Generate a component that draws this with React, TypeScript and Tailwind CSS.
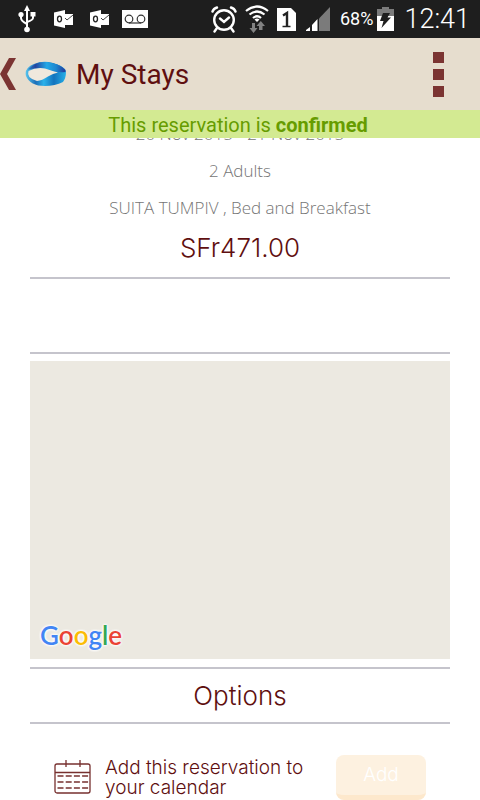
import React from "react";

function UsbIcon() {
  return (
    <svg width="18" height="28" viewBox="0 0 18 28" fill="none" stroke="#fff" strokeWidth="2" aria-hidden="true">
      <path d="M9 4v20M3 10v3q0 3 6 6M15 9v4q0 2-6 4" />
      <path d="M9 0l3 6H6z" fill="#fff" stroke="none" />
      <circle cx="9" cy="24.500" r="2.800" fill="#fff" stroke="none" />
      <circle cx="3" cy="9.500" r="2.600" fill="#fff" stroke="none" />
      <path d="M12.500 7h5v4.500h-5z" fill="#fff" stroke="none" />
    </svg>
  );
}

function OutlookIcon() {
  return (
    <svg width="20" height="18" viewBox="0 0 20 18" aria-hidden="true">
      <path d="M10 4h9v11h-9z" fill="#fff" />
      <path d="M11 8l2 2 6-5" fill="none" stroke="#444" strokeWidth="1" />
      <path d="M0 2.500L11 0v18L0 15.500z" fill="#fff" />
      <ellipse cx="5.500" cy="9" rx="2" ry="2.800" fill="none" stroke="#222" strokeWidth="1.300" />
    </svg>
  );
}

function VoicemailIcon() {
  return (
    <svg width="26" height="18" viewBox="0 0 26 18" aria-hidden="true">
      <path d="M0 0h26v18H0z" fill="#fff" />
      <g fill="none" stroke="#333" strokeWidth="1.200">
        <circle cx="7" cy="9" r="3.800" />
        <circle cx="19" cy="9" r="3.800" />
        <path d="M7 13h12" />
      </g>
    </svg>
  );
}

function AlarmIcon() {
  return (
    <svg width="26" height="27" viewBox="0 0 26 27" fill="none" stroke="#fff" strokeWidth="2.400" strokeLinecap="round" aria-hidden="true">
      <circle cx="13" cy="14" r="9.800" />
      <path d="M9 12.500l4 3.500 5-4.500M1.500 5.500q1-3 4.500-4M24.500 5.500q-1-3-4.500-4M6 22l-2.500 3.500M20 22l2.500 3.500" />
    </svg>
  );
}

function WifiIcon() {
  return (
    <svg width="24" height="28" viewBox="0 0 24 28" fill="none" stroke="#fff" strokeWidth="2.200" aria-hidden="true">
      <path d="M1 6q11-9 22 0M4.500 9.500q7.500-6 15 0M8 13q4-3.500 8 0" />
      <path d="M9.500 14.500q2.500-2 5 0L12 17z" fill="#fff" stroke="none" />
      <path d="M7 18h3v5h2.500L8.500 28 4.500 23H7zM14 25h3.500v-4H20l-4.200-5-4.300 5H14z" fill="#828282" stroke="none" />
    </svg>
  );
}

function SimIcon() {
  return (
    <svg width="19" height="23" viewBox="0 0 19 23" role="img" aria-label="SIM 1">
      <path d="M0 0h14l5 5v18H0z" fill="#fff" />
      <path d="M6 7.500l4-2.500v14" fill="none" stroke="#222" strokeWidth="2.400" />
      <path d="M5.500 18.500h8" stroke="#222" strokeWidth="1.500" />
    </svg>
  );
}

function SignalIcon() {
  return (
    <svg width="24" height="24" viewBox="0 0 24 24" aria-hidden="true">
      <path d="M13 11.500L24 0v24H13z" fill="#7b7b7b" />
      <path d="M0 24v-1l4-3v4zM6 24v-6l5.500-6v12z" fill="#fff" />
    </svg>
  );
}

function BatteryIcon() {
  return (
    <svg width="17" height="24" viewBox="0 0 17 24" aria-hidden="true">
      <path d="M5 0h7v2h5v7H0V2h5z" fill="#7b7b7b" />
      <path d="M0 9h17v15H0z" fill="#fff" />
      <path d="M6 6h7L10.500 10.500H14L4.500 21l2-7H3z" fill="#1e1e1e" />
    </svg>
  );
}

function StatusBar() {
  return (
    <div className="flex h-[38px] shrink-0 items-center bg-[#1e1e1e] pr-2.5 pl-[18px] font-['Roboto',sans-serif] text-white">
      <div className="flex items-center gap-4">
        <UsbIcon />
        <span className="ml-0.5"><OutlookIcon /></span>
        <OutlookIcon />
        <span className="-ml-1"><VoicemailIcon /></span>
      </div>
      <div className="ml-auto flex items-center gap-2.5">
        <div className="flex items-center gap-2">
          <AlarmIcon />
          <WifiIcon />
          <SimIcon />
        </div>
        <SignalIcon />
        <span className="flex items-center gap-1 text-lg leading-6">68% <BatteryIcon /></span>
        <span className="text-[27px] leading-8 font-light">12:41</span>
      </div>
    </div>
  );
}

function Logo() {
  return (
    <svg width="42" height="28" viewBox="0 0 42 28" aria-hidden="true">
      <defs>
        <linearGradient id="band" x1="0" y1="0" x2="1" y2="0">
          <stop offset="0" stopColor="#2b7fc4" />
          <stop offset="0.200" stopColor="#2344a0" />
          <stop offset="0.500" stopColor="#22a8e6" />
          <stop offset="0.750" stopColor="#1d86cf" />
          <stop offset="1" stopColor="#22389a" />
        </linearGradient>
        <linearGradient id="fold" x1="0" y1="0" x2="1" y2="0">
          <stop offset="0" stopColor="#56c5ee" />
          <stop offset="0.250" stopColor="#1d6fb8" />
          <stop offset="0.450" stopColor="#2cb2ea" />
          <stop offset="0.700" stopColor="#1373bd" />
          <stop offset="1" stopColor="#25b0e8" />
        </linearGradient>
      </defs>
      <path d="M1 16Q-1 8 9 4 18 0 28 3q8 2 12 6l1 3q0 6-3 10-8 4-18 4Q5 26 1 16z" fill="url(#fold)" />
      <path d="M3 9.500Q11 1 21 2q13 1 19.500 8v2Q33 13 27 10.500 16 6 3 9.500z" fill="url(#band)" />
      <path d="M3.500 11Q11 7 20 8.500q6 2 13 4-5 1-10 4-6 4-11 4.500Q1 18 3.500 11z" fill="#f0e8dd" />
    </svg>
  );
}

function CalendarIcon() {
  return (
    <svg width="38" height="34" viewBox="0 0 38 34" className="shrink-0" fill="none" stroke="#77302f" strokeWidth="1.300" aria-hidden="true">
      <rect x="1" y="4" width="35" height="29" rx="2" />
      <path d="M1 12.500h35M12 0v7M26 0v7" />
      <path d="M3.500 16h31M3.500 22h31M3.500 28h31" strokeDasharray="6 2.200" />
    </svg>
  );
}

const googleLetters = [
  ["G", "text-[#4285f4]"],
  ["o", "text-[#ea4335]"],
  ["o", "text-[#fbbc05]"],
  ["g", "text-[#4285f4]"],
  ["l", "text-[#34a853]"],
  ["e", "text-[#ea4335]"],
];

export default function App() {
  return (
    <div className="flex h-screen flex-col overflow-hidden bg-white font-['Inter',sans-serif] text-[#5f0f10]">
      <StatusBar />
      <header className="flex h-[72px] shrink-0 items-center bg-[#e6ddce] pr-9 font-['Roboto',sans-serif]">
        <button aria-label="Back" className="mr-[9px]">
          <svg width="16" height="32" viewBox="0 0 16 32" aria-hidden="true">
            <path d="M9 0h7L7 16l9 16H9L0 16z" fill="#7b3432" />
          </svg>
        </button>
        <Logo />
        <h1 className="ml-[9px] pt-0.5 text-[28px] leading-9">My Stays</h1>
        <button aria-label="More options" className="ml-auto flex flex-col gap-1.5">
          <span className="size-[11px] bg-[#7b3432]" />
          <span className="size-[11px] bg-[#7b3432]" />
          <span className="size-[11px] bg-[#7b3432]" />
        </button>
      </header>
      <p role="status" className="z-10 shrink-0 bg-[#d3ea92] pr-1 pt-0.5 text-center font-['Roboto',sans-serif] text-xl leading-[26px] text-[#669c00]">
        This reservation is <strong className="font-bold">confirmed</strong>
      </p>
      <main className="-mt-6 px-[30px] text-center">
        <section className="h-[165px] border-b-2 border-[#c5c4cc]">
          <div className="pt-px font-['Open_Sans',sans-serif] text-[17px] leading-[37px] font-light text-[#757575]">
            <p>20 Nov 2015 - 21 Nov 2015</p>
            <p>2 Adults</p>
            <p>SUITA TUMPIV , Bed and Breakfast</p>
          </div>
          <p className="pt-0.5 text-[26px] leading-10 font-light">SFr471.00</p>
        </section>
        <div className="h-[75px] border-b-2 border-[#c5c4cc]" />
        <section aria-label="Map" className="mt-[7px] mb-2 flex h-[298px] items-end bg-[#ece9e1] px-2.5 pb-2">
          <span className="font-['Lato',sans-serif] text-[26px] leading-8 font-semibold [text-shadow:0_0_3px_white,0_0_3px_white,0_0_3px_white]">
            {googleLetters.map(([letter, color], i) => (
              <span key={i} className={color}>{letter}</span>
            ))}
          </span>
        </section>
        <h2 className="border-y-2 border-[#c5c4cc] py-2 text-[26px] leading-[37px] font-light">Options</h2>
        <div className="flex items-start px-6 pt-[31px] text-left">
          <span className="pt-[5px]"><CalendarIcon /></span>
          <p className="ml-[13px] w-[216px] pt-[3px] text-[19px] leading-5 font-light">Add this reservation to your calendar</p>
          <button className="ml-auto h-[45px] w-[90px] shrink-0 rounded-lg border-b-5 border-[#fde8cc] bg-[#fdf1e0] text-[19px] font-light text-white">Add</button>
        </div>
      </main>
    </div>
  );
}
